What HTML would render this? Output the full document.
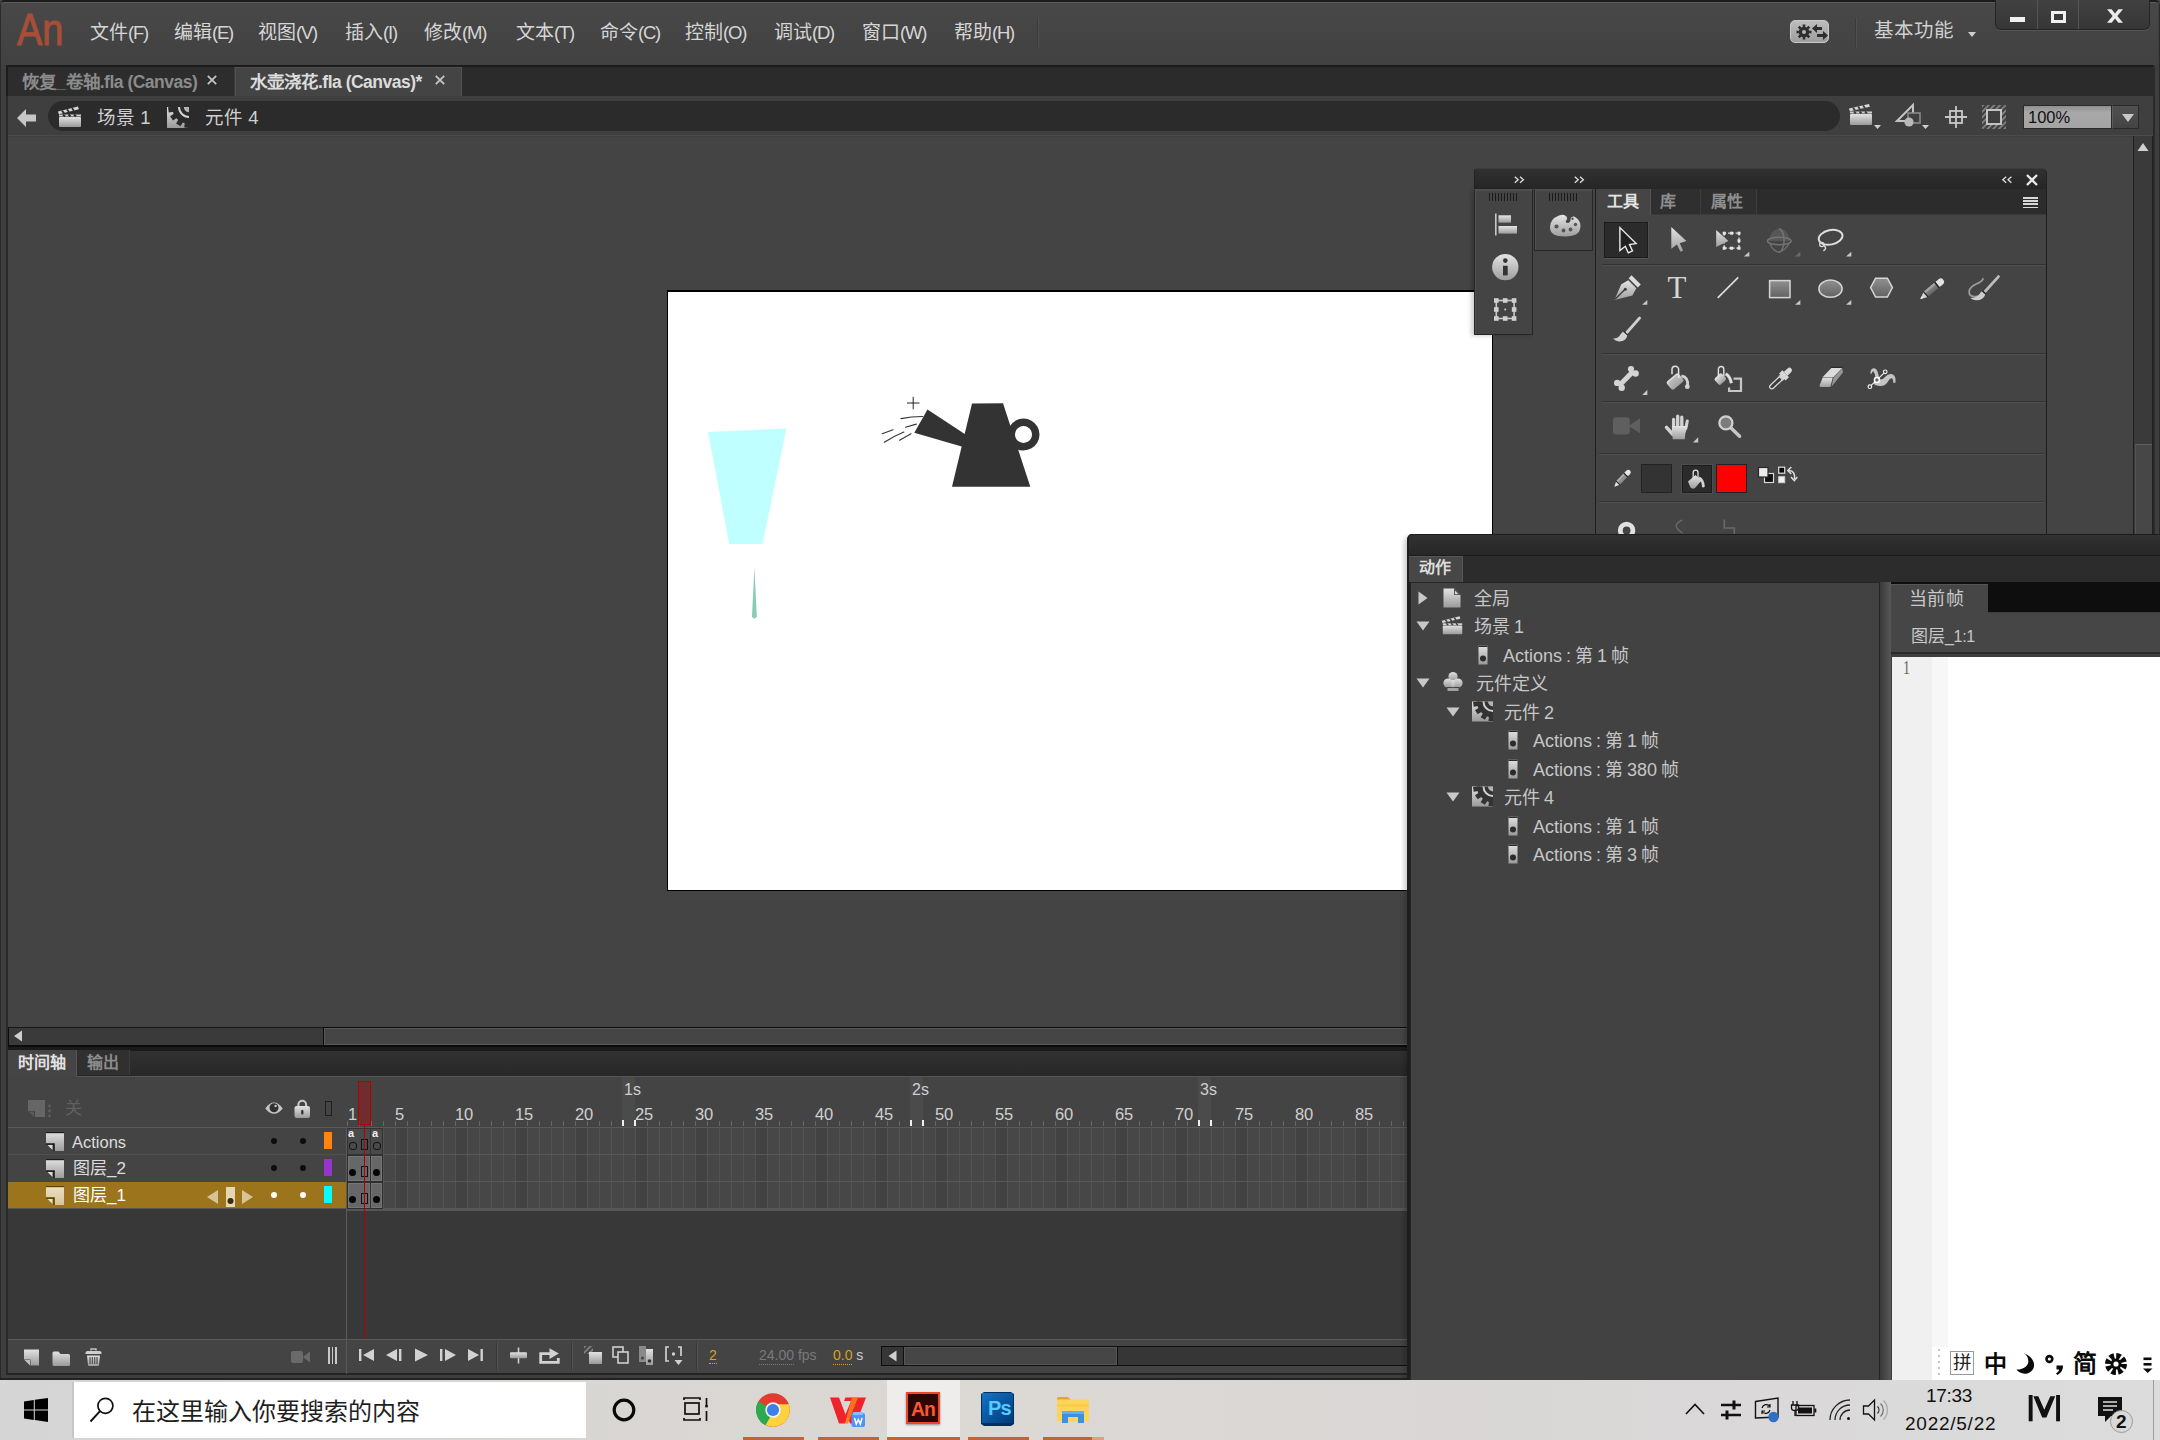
<!DOCTYPE html>
<html lang="zh-CN">
<head>
<meta charset="utf-8">
<title>Adobe Animate</title>
<style>
*{box-sizing:border-box;margin:0;padding:0}
html,body{width:2160px;height:1440px;overflow:hidden;background:#444;font-family:"Liberation Sans",sans-serif;color:#d2d2d2}
.a{position:absolute}
.t{position:absolute;white-space:nowrap;line-height:1}
svg{position:absolute;overflow:visible}
/* ---------- app frame ---------- */
#app{left:0;top:0;width:2160px;height:1380px;background:#3e3e3e;border-radius:5px 5px 0 0;overflow:hidden}
#menubar{left:1px;top:2px;width:2157px;height:63px;background:linear-gradient(#484848,#414141);border-radius:4px 4px 0 0;border-top:1px solid #5c5c5c}
.menu{top:23px;font-size:19px;color:#d6d6d6}
#tabbar{left:6px;top:65px;width:2148px;height:31px;background:#2b2b2b;border-top:2px solid #1c1c1c;border-left:2px solid #1c1c1c}
.doctab{top:67px;height:29px;font-size:17px;font-weight:bold}
#crumb{left:8px;top:96px;width:2146px;height:40px;background:#3f3f3f;border-bottom:1px solid #4c4c4c}
#pill{left:48px;top:101px;width:1792px;height:30px;border-radius:15px;background:#2b2b2b}
#stagearea{left:8px;top:137px;width:2125px;height:890px;background:#444}
#stage{left:667px;top:290px;width:826px;height:601px;background:#fff;border:1px solid #000;border-top-width:2px}

#logo{left:17px;top:8px;font-size:44px;color:#a84e36;transform-origin:0 0;transform:scaleX(.86);letter-spacing:0px;-webkit-text-stroke:1px #a84e36}
.l{letter-spacing:-1.2px;font-size:18.5px}
.l2{letter-spacing:-.5px}
.doctabt{top:74px;font-size:17.5px;font-weight:bold}
.crumbt{top:109px;font-size:18.5px;color:#cfcfcf}
#syncbtn{left:1790px;top:20px;width:39px;height:23px;border-radius:5px;background:linear-gradient(#bdbdbd,#9e9e9e);border:1px solid #c9c9c9}
.tri-d{width:0;height:0;border-left:4px solid transparent;border-right:4px solid transparent;border-top:5px solid #d0d0d0}
.tri-d2{width:0;height:0;border-left:6px solid transparent;border-right:6px solid transparent;border-top:8px solid #c8c8c8}
#winbtns{left:1995px;top:0;width:155px;height:30px;border-radius:0 0 6px 6px;background:linear-gradient(#414141,#363636);border:1px solid #252525;border-top:none;box-shadow:0 1px 0 #555}
#zoombox{left:2023px;top:105px;width:89px;height:24px;background:linear-gradient(#8f8f8f,#a8a8a8 30%,#a4a4a4);border:1px solid #2a2a2a}
#zoombtn{left:2112px;top:105px;width:27px;height:24px;background:linear-gradient(#505050,#444);border:1px solid #2a2a2a;border-left:1px solid #5c5c5c}
/* scrollbars */
#vscroll{left:2133px;top:136px;width:20px;height:900px;background:#3a3a3a;border-left:1.5px solid #1f1f1f;border-right:1.5px solid #1f1f1f}
#hscroll{left:8px;top:1026.5px;width:1399px;height:20px;background:#3a3a3a;border-top:1.5px solid #181818;border-bottom:2px solid #0c0c0c;border-left:1.5px solid #0c0c0c}
/* ---------- timeline ---------- */
#tl{left:8px;top:1047px;width:1399px;height:327px;background:#444}
#tltabs{left:8px;top:1046.5px;width:1399px;height:29.5px;background:linear-gradient(#313131,#282828);border-top:4px solid #1b1b1b}
#tlbelow{left:8px;top:1209px;width:1399px;height:130px;background:#383838}
.kf{height:27px;background:#676767;border:1px solid #2e2e2e;box-shadow:inset 0 0 0 1px #767676}
#tlbar{left:8px;top:1339px;width:1399px;height:35px;background:#444;border-top:1px solid #5a5a5a;border-bottom:1px solid #222}

/* ---------- floating panels ---------- */
#fp1head{left:1474px;top:168px;width:121px;height:21px;background:linear-gradient(#303030,#262626);border-top:1px solid #3c3c3c;border-radius:4px 0 0 0;border-left:1px solid #222}
.chev{font-size:13px;color:#dcdcdc;letter-spacing:0;transform:scaleY(.9)}
#col1{left:1474px;top:189px;width:59px;height:146px;background:#444;border:1px solid #262626;border-top:1px solid #4e4e4e;box-shadow:inset 1px 1px 0 #505050,-3px 1px 4px rgba(0,0,0,.18)}
#col2{left:1534px;top:189px;width:59px;height:62px;background:#444;border:1px solid #262626;border-top:1px solid #4e4e4e;box-shadow:inset 1px 1px 0 #505050}
.grip{width:29px;height:8px;background:repeating-linear-gradient(90deg,#1a1a1a 0,#1a1a1a 1.4px,transparent 1.4px,transparent 3px)}
#tphead{left:1594px;top:168px;width:453px;height:21px;background:linear-gradient(#303030,#262626);border-top:1px solid #3c3c3c;border-radius:0 5px 0 0;border-right:1px solid #222}
#tp{left:1595px;top:189px;width:452px;height:345px;background:#444;border-left:1px solid #1e1e1e;border-right:1px solid #1e1e1e;overflow:hidden}
#tptabs{left:0;top:0;width:452px;height:26px;background:#2c2c2c;border-bottom:1px solid #3a3a3a}
.sep{left:6px;width:445px;height:2px;background:#333;border-bottom:1px solid #4f4f4f}
#ap{left:1407px;top:534px;width:753px;height:846px;background:#3e3e3e;border-left:3px solid #1e1e1e;border-radius:5px 0 0 0;overflow:visible;box-shadow:-3px 3px 5px rgba(0,0,0,.2)}
#aphead{left:-1.5px;top:0;width:755px;height:21px;background:linear-gradient(#313131,#272727);border-top:1px solid #1e1e1e;border-radius:3px 0 0 0}
#aptabs{left:0;top:21px;width:753px;height:27px;background:#2c2c2c;border-top:1px solid #1c1c1c}
#tree{left:0;top:48px;width:470px;height:800px;background:#424242;border:1px solid #252525}
.trt{font-size:18px;color:#c6c6c6;word-spacing:-1px}
#apdiv{left:470px;top:48px;width:11px;height:800px;background:linear-gradient(90deg,#3a3a3a,#585858)}

#ticks{left:347px;top:1121px;width:1060px;height:5px;background:repeating-linear-gradient(90deg,#686868 0,#686868 1.5px,transparent 1.5px,transparent 12px)}
.sec{top:1082px;font-size:16px;color:#cfcfcf}
.rn{top:1106px;font-size:16.5px;color:#d0d0d0;letter-spacing:-.3px}
.grid{left:347px;width:1060px;height:27px;background:repeating-linear-gradient(90deg,#535353 0,#535353 1px,transparent 1px,transparent 12px),repeating-linear-gradient(90deg,transparent 0,transparent 48px,#424242 48px,#424242 60px),#474747;border-bottom:1px solid #585858}
.ln{font-size:16.5px;color:#dcdcdc}
.dot{width:6px;height:6px;border-radius:3px;background:#0c0c0c}
.kc{width:8px;height:8px;border-radius:3px;border:1.5px solid #111}
.kr{width:7px;height:11px;border:1.5px solid #111}
.kd{width:7.4px;height:7.4px;border-radius:4px;background:#050505}

.vsep{top:1342px;width:2px;height:28px;background:#383838;border-right:1px solid #525252}
/* ---------- taskbar ---------- */
#taskbar{left:0;top:1380px;width:2160px;height:60px;background:linear-gradient(90deg,#d5d5d5 0%,#d8d6d3 25%,#dcd8d4 45%,#d9d6d6 70%,#dcdcdc 100%)}
#search{left:74px;top:1382px;width:512px;height:56px;background:#fff}

.ul{top:1437px;height:3px;background:#c8622f}
.ime{top:1353px;font-size:20px;font-weight:bold;color:#0a0a0a}
</style>
</head>
<body>
<div id="app" class="a">
  <div id="menubar" class="a"></div>
  <div id="tabbar" class="a"></div>
  <div id="crumb" class="a"></div>
  <div id="pill" class="a"></div>


  <!-- window frame lines -->
  <div class="a" style="left:0;top:0;width:2160px;height:2px;background:#1c1c1c"></div>
  <div class="a" style="left:0;top:4px;width:1px;height:1376px;background:#2a2a2a"></div>
  <div class="a" style="left:6px;top:96px;width:2px;height:1278px;background:#2a2a2a"></div>
  <div class="a" style="left:2153px;top:66px;width:2px;height:470px;background:#2a2a2a"></div>
  <div class="a" style="left:2159px;top:4px;width:1px;height:530px;background:#2a2a2a"></div>
  <div class="a" style="left:6px;top:1373px;width:1402px;height:2px;background:#262626"></div>
  <div class="a" style="left:0;top:1378px;width:1408px;height:2px;background:#222"></div>
  <!-- ===== menu bar ===== -->
  <div class="t" id="logo">An</div>
  <div class="t menu" style="left:90px">文件<span class="l">(F)</span></div>
  <div class="t menu" style="left:174px">编辑<span class="l">(E)</span></div>
  <div class="t menu" style="left:258px">视图<span class="l">(V)</span></div>
  <div class="t menu" style="left:345px">插入<span class="l">(I)</span></div>
  <div class="t menu" style="left:424px">修改<span class="l">(M)</span></div>
  <div class="t menu" style="left:516px">文本<span class="l">(T)</span></div>
  <div class="t menu" style="left:600px">命令<span class="l">(C)</span></div>
  <div class="t menu" style="left:685px">控制<span class="l">(O)</span></div>
  <div class="t menu" style="left:774px">调试<span class="l">(D)</span></div>
  <div class="t menu" style="left:862px">窗口<span class="l">(W)</span></div>
  <div class="t menu" style="left:954px">帮助<span class="l">(H)</span></div>
  <div class="a" style="left:1037px;top:18px;width:2px;height:30px;background:#3a3a3a;border-right:1px solid #505050"></div>
  <!-- sync button -->
  <div class="a" id="syncbtn"></div>
  <svg style="left:1795px;top:22px" width="34" height="20" viewBox="0 0 34 20">
    <g fill="#2e2e2e">
      <circle cx="9" cy="10" r="5.2"/>
      <g stroke="#2e2e2e" stroke-width="2.6" stroke-linecap="butt">
        <path d="M9 2.5V17.5M1.5 10H16.5M3.7 4.7L14.3 15.3M14.3 4.7L3.7 15.3"/>
      </g>
      <circle cx="9" cy="10" r="2" fill="#b4b4b4"/>
      <path d="M17 6.5l5-4.5v3h5v3h-5v3z"/>
      <path d="M33 13.5l-5 4.5v-3h-6v-3h6v-3z"/>
    </g>
  </svg>
  <div class="a" style="left:1855px;top:18px;width:2px;height:30px;background:#3a3a3a;border-right:1px solid #505050"></div>
  <div class="t" style="left:1874px;top:21px;font-size:19.5px;color:#d0d0d0">基本功能</div>
  <div class="a tri-d" style="left:1968px;top:32px"></div>
  <!-- window buttons -->
  <div class="a" id="winbtns">
    <div class="a" style="left:41px;top:0;width:1px;height:29px;background:#2a2a2a;border-right:1px solid #555"></div>
    <div class="a" style="left:82px;top:0;width:1px;height:29px;background:#2a2a2a;border-right:1px solid #555"></div>
    <div class="a" style="left:14px;top:17px;width:15px;height:5px;background:#f0f0f0"></div>
    <div class="a" style="left:55px;top:11px;width:15px;height:12px;border:3px solid #f0f0f0"></div>
    <svg style="left:110.5px;top:9px" width="16" height="14" viewBox="0 0 15.5 13.3"><path d="M0 0H4.5L7.75 4.3L11 0H15.5L10 6.65L15.5 13.3H11L7.75 9L4.5 13.3H0L5.5 6.65z" fill="#ececec"/></svg>
  </div>
  <!-- ===== document tabs ===== -->
  <div class="a" style="left:8px;top:67px;width:227px;height:29px;background:#2d2d2d;border-right:1px solid #3c3c3c"></div>
  <div class="a" style="left:235px;top:67px;width:227px;height:29px;background:#444;border-top:1px solid #515151;border-right:1px solid #515151;border-left:1px solid #515151"></div>
  <div class="t doctabt" style="left:22px;color:#8b8b8b">恢复_卷轴<span class="l2">.fla (Canvas)</span></div>
  <div class="t doctabt" style="left:250px;color:#dcdcdc">水壶浇花<span class="l2">.fla (Canvas)*</span></div>
  <svg style="left:207px;top:75px" width="10" height="10" viewBox="0 0 10 10"><path d="M0.8 0.8L9.2 9.2M9.2 0.8L0.8 9.2" stroke="#c8c8c8" stroke-width="1.7"/></svg>
  <svg style="left:435px;top:75px" width="10" height="10" viewBox="0 0 10 10"><path d="M0.8 0.8L9.2 9.2M9.2 0.8L0.8 9.2" stroke="#c8c8c8" stroke-width="1.7"/></svg>
  <!-- ===== breadcrumb row ===== -->
  <svg style="left:17px;top:109px" width="20" height="18" viewBox="0 0 20 18"><path d="M0 9L9 0v5.5h10v7H9V18z" fill="#c6c6c6"/></svg>
  <svg style="left:57px;top:106px" width="26" height="22" viewBox="0 0 26 22" id="clap1">
    <defs><clipPath id="symclip"><rect x="0" y="0" width="22" height="21"/></clipPath><linearGradient id="gg" x1="0" y1="0" x2="0" y2="1"><stop offset="0" stop-color="#e2e2e2"/><stop offset="1" stop-color="#9a9a9a"/></linearGradient></defs>
    <rect x="2" y="11" width="22" height="10" rx="1" fill="url(#gg)"/>
    <path d="M2 8.5h22v2H2z" fill="#d0d0d0"/>
    <path d="M1 5.5L21 0.5l0.8 2.8L1.8 8.3z" fill="#d8d8d8"/>
    <path d="M5 4.6l2 2.6M10 3.4l2 2.6M15 2.2l2 2.6M6 8.5l2 2M11.5 8.5l2 2M17 8.5l2 2" stroke="#2b2b2b" stroke-width="1.8"/>
  </svg>
  <div class="t crumbt" style="left:97px">场景 1</div>
  <svg style="left:167px;top:107px" width="22" height="21" viewBox="0 0 22 21">
    <rect x="0" y="0" width="22" height="21" fill="url(#gg)"/><g fill="#2b2b2b" clip-path="url(#symclip)"><circle cx="22" cy="0" r="16.8"/><rect x="-2.6" y="14" width="5.2" height="6.8" transform="translate(22 0) rotate(82)"/><rect x="-2.6" y="14" width="5.2" height="6.8" transform="translate(22 0) rotate(57)"/><rect x="-2.6" y="14" width="5.2" height="6.8" transform="translate(22 0) rotate(31)"/><rect x="-2.6" y="14" width="5.2" height="6.8" transform="translate(22 0) rotate(6)"/></g><circle cx="22" cy="0" r="10" fill="none" stroke="#d2d2d2" stroke-width="2" clip-path="url(#symclip)"/><circle cx="22" cy="0" r="5.2" fill="#b4b4b4" clip-path="url(#symclip)"/>
  </svg>
  <div class="t crumbt" style="left:205px">元件 4</div>
  <!-- right-side icons on crumb row -->
  <svg style="left:1849px;top:104px" width="34" height="26" viewBox="0 0 34 26">
    <rect x="1" y="10" width="22" height="11" rx="1" fill="url(#gg)"/>
    <path d="M1 7.5h22v2H1z" fill="#d0d0d0"/>
    <path d="M0 4.5L20 0l0.8 2.8L0.8 7.3z" fill="#d8d8d8"/>
    <path d="M4 3.6l2 2.6M9 2.5l2 2.6M14 1.4l2 2.6M5 7.5l2 2M10.5 7.5l2 2M16 7.5l2 2" stroke="#3f3f3f" stroke-width="1.8"/>
    <path d="M25 21h7l-3.5 4z" fill="#d0d0d0"/>
  </svg>
  <svg style="left:1896px;top:104px" width="36" height="26" viewBox="0 0 36 26">
    <path d="M1 17L17 1v16z" fill="none" stroke="#c4c4c4" stroke-width="2"/>
    <rect x="12" y="9" width="12" height="10" fill="#3f3f3f" stroke="#8a8a8a" stroke-width="1.6"/>
    <circle cx="13" cy="18" r="4.6" fill="#b9b9b9"/>
    <path d="M26 21h7l-3.5 4z" fill="#d0d0d0"/>
  </svg>
  <svg style="left:1944px;top:105px" width="24" height="24" viewBox="0 0 24 24"><path d="M12 1v22M1 12h22" stroke="#c8c8c8" stroke-width="1.8"/><rect x="6" y="6" width="12" height="12" fill="none" stroke="#c8c8c8" stroke-width="1.8"/></svg>
  <svg style="left:1982px;top:105px" width="24" height="24" viewBox="0 0 24 24">
    <defs><pattern id="hatch" width="4" height="4" patternUnits="userSpaceOnUse" patternTransform="rotate(-45)"><rect width="4" height="1.6" fill="#8c8c8c"/></pattern></defs>
    <rect x="0" y="0" width="24" height="24" fill="url(#hatch)"/>
    <rect x="5" y="5" width="14" height="14" fill="#3f3f3f" stroke="#d0d0d0" stroke-width="1.8"/>
  </svg>
  <div class="a" id="zoombox"><div class="t" style="left:4px;top:3px;font-size:16.5px;color:#111">100%</div></div>
  <div class="a" id="zoombtn"><div class="a tri-d2" style="left:9px;top:8px"></div></div>
  <div id="stagearea" class="a"></div>
  <div id="stage" class="a"></div>

  <!-- ===== stage artwork ===== -->
  <svg style="left:0;top:0" width="2160" height="1440" viewBox="0 0 2160 1440" id="art">
    <polygon points="708,432 786.5,428.5 762.5,544 729.2,544" fill="#bfffff"/>
    <path d="M754.4 567.5L756.8 616.5Q754.4 620.5 752 616.5Z" fill="#86ccb6"/>
    <g fill="#333">
      <polygon points="972,403.6 1003,403.2 1030.3,486.8 952,486.8"/>
      <polygon points="927.5,409.5 914.3,432.8 962.5,446.8 965.5,434.6"/>
      <path d="M1023.5 418.5a16 16 0 1 1 -0.01 0zM1023.5 426a8.5 8.5 0 1 0 0.01 0z" fill-rule="evenodd"/>
    </g>
    <g fill="none" stroke="#333" stroke-width="1.1" stroke-linecap="round">
      <path d="M901 418.6Q911 416.5 922.5 416.5"/>
      <path d="M905.5 427.3L916.3 424.1"/>
      <path d="M882.2 433.8L893 429.8"/>
      <path d="M884.3 442.2Q893 436.5 903.8 432"/>
      <path d="M899.6 440.2L911 433.8"/>
    </g>
    <path d="M907 403h12.5M913.2 396.8v12.5" stroke="#222" stroke-width="1" fill="none"/>
  </svg>
  <div id="vscroll" class="a"></div>
  <div id="hscroll" class="a"></div>
  <div id="tl" class="a"></div>
  <div id="tltabs" class="a"></div>
  <div id="tlbelow" class="a"></div>
  <div id="tlbar" class="a"></div>
  <!-- ===== timeline ===== -->
  <div class="a" style="left:8px;top:1050px;width:69px;height:26px;background:#454545;border-right:1px solid #555"></div>
  <div class="a" style="left:77px;top:1050px;width:53px;height:25px;background:#303030;border-right:1px solid #3d3d3d"></div>
  <div class="t" style="left:18px;top:1055px;font-size:16px;font-weight:bold;color:#e2e2e2">时间轴</div>
  <div class="t" style="left:87px;top:1055px;font-size:16px;font-weight:bold;color:#8c8c8c">输出</div>
  <div class="a" style="left:77px;top:1076px;width:1330px;height:1px;background:#565656"></div>
  <!-- layer header -->
  <svg style="left:27px;top:1099px" width="26" height="20" viewBox="0 0 26 20"><path d="M1 1h17v17H8v-6H1z" fill="#666"/><path d="M1.5 12.5h5.5v5.5z" fill="#5a5a5a"/><circle cx="22.5" cy="7" r="1.4" fill="#5e5e5e"/><circle cx="22.5" cy="12" r="1.4" fill="#5e5e5e"/><circle cx="22.5" cy="17" r="1.4" fill="#5e5e5e"/></svg>
  <div class="t" style="left:65px;top:1100px;font-size:17px;color:#616161">关</div>
  <svg style="left:265px;top:1101px" width="18" height="14.5" viewBox="0 0 18 14.5"><path d="M0.3 7.4Q9-4.2 17.7 7.4Q9 18.2 0.3 7.4z" fill="#c6c6c6"/><circle cx="9" cy="6.8" r="4.5" fill="#303030"/><circle cx="10.6" cy="5" r="1.3" fill="#bdbdbd"/></svg>
  <svg style="left:294px;top:1099px" width="16.5" height="19.5" viewBox="0 0 16.5 19.5"><path d="M4.4 8V5.6a3.85 3.85 0 0 1 7.7 0V8" fill="none" stroke="#cacaca" stroke-width="2.1"/><rect x="0.5" y="7" width="15.5" height="12" rx="2.2" fill="url(#gg)"/><rect x="7.2" y="11" width="2.2" height="4.6" rx=".8" fill="#2e2e2e"/></svg>
  <div class="a" style="left:325px;top:1101px;width:7px;height:15px;border:1.5px solid #1e1e1e"></div>
  <!-- ruler -->
  <div class="a" style="left:622px;top:1077px;width:13px;height:51px;background:#4b4b4b"></div>
  <div class="a" style="left:910px;top:1077px;width:13px;height:51px;background:#4b4b4b"></div>
  <div class="a" style="left:1198px;top:1077px;width:13px;height:51px;background:#4b4b4b"></div>
  <div class="a" id="ticks"></div>
  <div class="a" style="left:622px;top:1120px;width:2px;height:6px;background:#f0f0f0"></div><div class="a" style="left:634px;top:1120px;width:2px;height:6px;background:#f0f0f0"></div>
  <div class="a" style="left:910px;top:1120px;width:2px;height:6px;background:#f0f0f0"></div><div class="a" style="left:922px;top:1120px;width:2px;height:6px;background:#f0f0f0"></div>
  <div class="a" style="left:1198px;top:1120px;width:2px;height:6px;background:#f0f0f0"></div><div class="a" style="left:1210px;top:1120px;width:2px;height:6px;background:#f0f0f0"></div>
  <div class="t sec" style="left:624px">1s</div><div class="t sec" style="left:912px">2s</div><div class="t sec" style="left:1200px">3s</div>
  <div class="t rn" style="left:348px">1</div>
  <div class="t rn" style="left:395px">5</div>
  <div class="t rn" style="left:455px">10</div><div class="t rn" style="left:515px">15</div><div class="t rn" style="left:575px">20</div><div class="t rn" style="left:635px">25</div>
  <div class="t rn" style="left:695px">30</div><div class="t rn" style="left:755px">35</div><div class="t rn" style="left:815px">40</div><div class="t rn" style="left:875px">45</div>
  <div class="t rn" style="left:935px">50</div><div class="t rn" style="left:995px">55</div><div class="t rn" style="left:1055px">60</div><div class="t rn" style="left:1115px">65</div>
  <div class="t rn" style="left:1175px">70</div><div class="t rn" style="left:1235px">75</div><div class="t rn" style="left:1295px">80</div><div class="t rn" style="left:1355px">85</div>
  <div class="a" style="left:8px;top:1127px;width:1399px;height:1px;background:#5a5a5a"></div>
  <!-- layer rows -->
  <div class="a" style="left:8px;top:1154px;width:338px;height:1px;background:#505050"></div>
  <div class="a" style="left:8px;top:1182px;width:338px;height:26px;background:#9b741c"></div>
  <div class="a" style="left:8px;top:1208px;width:1399px;height:1px;background:#555"></div>
  <div class="a" style="left:346px;top:1128px;width:1px;height:246px;background:#5a5a5a"></div>
  <div class="a grid" style="top:1128px"></div>
  <div class="a grid" style="top:1155px"></div>
  <div class="a grid" style="top:1182px"></div>
  <div class="a" style="left:346px;top:1209px;width:1061px;height:2px;background:#565656"></div>
  <svg style="left:46px;top:1132px" width="18" height="19" viewBox="0 0 18 19"><defs><linearGradient id="gl1132" x1="0" y1="0" x2="0" y2="1"><stop offset="0" stop-color="#dcdcdc"/><stop offset="1" stop-color="#9c9c9c"/></linearGradient></defs><rect x="0" y="0" width="18" height="1.3" fill="#1c1c1c"/><path d="M0 1.3h18V19H8v-7H0z" fill="url(#gl1132)"/><path d="M0 12h8v7" fill="none" stroke="#1c1c1c" stroke-width="1.6"/><path d="M1.5 13h5v5z" fill="#dcdcdc"/></svg>
  <svg style="left:46px;top:1159px" width="18" height="19" viewBox="0 0 18 19"><defs><linearGradient id="gl1159" x1="0" y1="0" x2="0" y2="1"><stop offset="0" stop-color="#dcdcdc"/><stop offset="1" stop-color="#9c9c9c"/></linearGradient></defs><rect x="0" y="0" width="18" height="1.3" fill="#1c1c1c"/><path d="M0 1.3h18V19H8v-7H0z" fill="url(#gl1159)"/><path d="M0 12h8v7" fill="none" stroke="#1c1c1c" stroke-width="1.6"/><path d="M1.5 13h5v5z" fill="#dcdcdc"/></svg>
  <svg style="left:46px;top:1186px" width="18" height="19" viewBox="0 0 18 19"><defs><linearGradient id="gs1186" x1="0" y1="0" x2="0" y2="1"><stop offset="0" stop-color="#ecdfc0"/><stop offset="1" stop-color="#d6c49a"/></linearGradient></defs><rect x="0" y="0" width="18" height="1.3" fill="#5a4000"/><path d="M0 1.3h18V19H8v-7H0z" fill="url(#gs1186)"/><path d="M0 12h8v7" fill="none" stroke="#5a4000" stroke-width="1.6"/><path d="M1.5 13h5v5z" fill="#ecdfc0"/></svg>
  <div class="t ln" style="left:72px;top:1134px">Actions</div>
  <div class="t ln" style="left:73px;top:1160px;font-size:17px">图层_2</div>
  <div class="t ln" style="left:73px;top:1187px;font-size:17px;color:#fff">图层_1</div>
  <div class="a dot" style="left:271px;top:1138px"></div><div class="a dot" style="left:300px;top:1138px"></div>
  <div class="a dot" style="left:271px;top:1165px"></div><div class="a dot" style="left:300px;top:1165px"></div>
  <div class="a dot" style="left:271px;top:1192px;background:#fff"></div><div class="a dot" style="left:300px;top:1192px;background:#fff"></div>
  <div class="a" style="left:324px;top:1132px;width:8px;height:17px;background:#ff8412"></div>
  <div class="a" style="left:324px;top:1159px;width:8px;height:17px;background:#9a33cc"></div>
  <div class="a" style="left:324px;top:1186px;width:8px;height:17px;background:#00ffff"></div>
  <svg style="left:206px;top:1187px" width="50" height="20" viewBox="0 0 50 20"><path d="M12 3v14L1 10z" fill="#d8c394"/><path d="M36 3v14l11-7z" fill="#d8c394"/><rect x="20" y="0" width="9" height="20" fill="#e6d7b3"/><circle cx="24.5" cy="14" r="3" fill="#3a2c08"/></svg>
  <!-- frames 1-3 -->
  <div class="a" style="left:347px;top:1128px;width:24px;height:27px;background:#4a4a4a;border:1px solid #333"></div>
  <div class="a" style="left:371px;top:1128px;width:12px;height:27px;background:#4a4a4a;border:1px solid #333;border-left:none"></div>
  <div class="a kf" style="left:347px;top:1155px;width:24px"></div>
  <div class="a kf" style="left:371px;top:1155px;width:12px;border-left:none"></div>
  <div class="a kf" style="left:347px;top:1182px;width:24px"></div>
  <div class="a kf" style="left:371px;top:1182px;width:12px;border-left:none"></div>
  <div class="t" style="left:348px;top:1128px;font-size:11px;font-weight:bold;color:#eee">a</div><div class="t" style="left:372px;top:1128px;font-size:11px;font-weight:bold;color:#eee">a</div>
  <div class="a kc" style="left:349px;top:1142px"></div><div class="a kc" style="left:373px;top:1142px"></div>
  <div class="a kr" style="left:361px;top:1139px"></div><div class="a kr" style="left:361px;top:1166px"></div><div class="a kr" style="left:361px;top:1193px"></div>
  <div class="a kd" style="left:349px;top:1169px"></div><div class="a kd" style="left:373px;top:1169px"></div>
  <div class="a kd" style="left:349px;top:1196px"></div><div class="a kd" style="left:373px;top:1196px"></div>

  <!-- stage h-scroll details -->
  <div class="a" style="left:322.5px;top:1026.5px;width:1086px;height:20px;background:#454545;border:1.5px solid #0a0a0a;border-bottom-width:2px;box-shadow:inset 0 0 0 1px #595959"></div>
  <svg style="left:13px;top:1030px" width="10" height="12" viewBox="0 0 10 12"><path d="M9 0.5v11L1 6z" fill="#d0d0d0"/></svg>
  <!-- stage v-scroll details -->
  <div class="a" style="left:2135px;top:444px;width:17px;height:100px;background:#474747;border-top:1px solid #5c5c5c;border-left:1px solid #555"></div>
  <svg style="left:2137px;top:142px" width="12" height="10" viewBox="0 0 12 10"><path d="M0.5 9h11L6 1z" fill="#d0d0d0"/></svg>
  <!-- timeline bottom bar -->
  <svg style="left:23px;top:1349px" width="16" height="17" viewBox="0 0 16 17"><path d="M1 0.5h15v16H7.5v-6H1z" fill="url(#gg)"/><path d="M1.5 11h5.5v5.5z" fill="#bdbdbd"/></svg>
  <svg style="left:52px;top:1351px" width="18" height="15" viewBox="0 0 18 15"><path d="M0.5 2a1.5 1.5 0 0 1 1.5-1.5h4.5l2 2.5h8a1.5 1.5 0 0 1 1.5 1.5v9a1.5 1.5 0 0 1-1.5 1.5h-14.5a1.5 1.5 0 0 1-1.5-1.5z" fill="url(#gg)"/></svg>
  <svg style="left:85px;top:1348px" width="17" height="18" viewBox="0 0 17 18"><path d="M6 2.5V1h5v1.5" fill="none" stroke="#c4c4c4" stroke-width="1.4"/><path d="M0.5 5q0-2 2-2h12q2 0 2 2v1h-16z" fill="#cfcfcf"/><path d="M2 7.5h13l-1 9.5q-.1 1-1 1H4q-.9 0-1-1z" fill="url(#gg)"/><path d="M5 9v7M7.3 9v7M9.7 9v7M12 9v7" stroke="#444" stroke-width="1.1"/></svg>
  <svg style="left:291px;top:1350px" width="20" height="14" viewBox="0 0 20 14"><rect x="0" y="1" width="12" height="12" rx="2" fill="#6a6a6a"/><path d="M12 7l7-5.5v11z" fill="#6a6a6a"/></svg>
  <div class="a" style="left:328px;top:1347px;width:9px;height:17px;background:repeating-linear-gradient(90deg,#c8c8c8 0,#c8c8c8 1.5px,transparent 1.5px,transparent 3.5px)"></div>
  <svg style="left:358px;top:1347px" width="130" height="16" viewBox="0 0 130 16" fill="#d2d2d2">
    <rect x="1" y="2" width="2.4" height="12"/><path d="M16 2v12L5 8z"/>
    <path d="M39 2v12L28 8z"/><rect x="41" y="2" width="2.4" height="12"/>
    <path d="M57 1.5v13L70 8z"/>
    <rect x="82" y="2" width="2.4" height="12"/><path d="M87 2v12l11-6z"/>
    <path d="M110 2v12l11-6z"/><rect x="122.5" y="2" width="2.4" height="12"/>
  </svg>
  <div class="a vsep" style="left:496px"></div>
  <svg style="left:510px;top:1347px" width="17" height="17" viewBox="0 0 17 17"><path d="M8.5 0.5v16" stroke="#d0d0d0" stroke-width="1.6"/><rect x="0" y="5.3" width="17" height="6" rx="1" fill="url(#gg)"/></svg>
  <svg style="left:538px;top:1347px" width="22" height="18" viewBox="0 0 22 18"><path d="M20.3 11V15.4H2.7V6.6H12.5" fill="none" stroke="#d2d2d2" stroke-width="2.8"/><path d="M11.5 1.2L20.8 6.6L11.5 12z" fill="#d2d2d2"/></svg>
  <div class="a vsep" style="left:571px"></div>
  <svg style="left:584px;top:1346px" width="18" height="18" viewBox="0 0 18 18"><rect x="0" y="0" width="9" height="8" fill="url(#hatch)"/><rect x="5" y="6" width="13" height="12" fill="url(#gg)"/></svg>
  <svg style="left:612px;top:1346px" width="18" height="18" viewBox="0 0 18 18"><rect x="1" y="1" width="10" height="10" fill="none" stroke="#d0d0d0" stroke-width="1.6"/><rect x="6" y="6" width="10" height="11" fill="#444" stroke="#d0d0d0" stroke-width="1.6"/></svg>
  <svg style="left:639px;top:1346px" width="16" height="19" viewBox="0 0 16 19"><rect x="0" y="0" width="7" height="16" fill="#8a8a8a"/><rect x="7" y="3" width="7" height="16" fill="url(#gg)"/><circle cx="10.5" cy="15" r="1.8" fill="#333"/><circle cx="3.5" cy="12" r="1.5" fill="#444"/></svg>
  <svg style="left:665px;top:1346px" width="18" height="20" viewBox="0 0 18 20"><path d="M4 1H1v14h3M13 1h3v9" fill="none" stroke="#d0d0d0" stroke-width="1.7"/><circle cx="8.5" cy="8" r="1.7" fill="#d0d0d0"/><path d="M9.5 14h8l-4 5z" fill="#d0d0d0"/></svg>
  <div class="a vsep" style="left:696px"></div>
  <div class="t" style="left:709px;top:1348px;font-size:14px;color:#d8a11e;border-bottom:1px dotted #d8a11e;padding-bottom:1px">2</div>
  <div class="t" style="left:759px;top:1348px;font-size:14px;color:#7a7a7a"><span style="border-bottom:1px dotted #7a7a7a;padding-bottom:1px">24.00</span> fps</div>
  <div class="t" style="left:833px;top:1348px;font-size:14px;color:#d0d0d0"><span style="color:#d8a11e;border-bottom:1px dotted #d8a11e;padding-bottom:1px">0.0</span> s</div>
  <div class="a" style="left:881px;top:1346px;width:527px;height:20px;background:#363636;border:1.5px solid #0e0e0e"></div>
  <div class="a" style="left:903px;top:1346px;width:215px;height:20px;background:#464646;border:1.5px solid #0e0e0e;box-shadow:inset 0 0 0 1px #575757"></div>
  <svg style="left:888px;top:1350px" width="9" height="12" viewBox="0 0 9 12"><path d="M8.5 0.5v11L0.5 6z" fill="#d0d0d0"/></svg>
  <!-- playhead -->
  <div class="a" style="left:358px;top:1081px;width:13px;height:44px;background:rgba(140,30,30,.62);border:1px solid #b40000"></div>
  <div class="a" style="left:364px;top:1125px;width:1px;height:213px;background:#b40000"></div>

</div>

<!-- ===== floating icon columns ===== -->
<div class="a" id="fp1head"></div>
<svg style="left:1514px;top:176px" width="10" height="8" viewBox="0 0 10 8"><path d="M0.8 0.8L4.2 3.8L0.8 6.8M6 0.8L9.4 3.8L6 6.8" fill="none" stroke="#e0e0e0" stroke-width="1.3"/></svg>
<svg style="left:1574px;top:176px" width="10" height="8" viewBox="0 0 10 8"><path d="M0.8 0.8L4.2 3.8L0.8 6.8M6 0.8L9.4 3.8L6 6.8" fill="none" stroke="#e0e0e0" stroke-width="1.3"/></svg>
<div class="a" id="col1"><div class="a grip" style="left:14px;top:3px"></div></div>
<div class="a" id="col2"><div class="a grip" style="left:14px;top:3px"></div></div>
<!-- ===== tool panel ===== -->
<div class="a" id="tphead"></div>
<svg style="left:2002px;top:176px" width="10" height="8" viewBox="0 0 10 8"><path d="M4.2 0.8L0.8 3.8L4.2 6.8M9.4 0.8L6 3.8L9.4 6.8" fill="none" stroke="#e0e0e0" stroke-width="1.3"/></svg>
<svg style="left:2026px;top:174px" width="12" height="12" viewBox="0 0 12 12"><path d="M1 1L11 11M11 1L1 11" stroke="#e8e8e8" stroke-width="2.4"/></svg>
<div class="a" id="tp">
  <div class="a" id="tptabs"></div>
  <div class="a" style="left:0;top:0;width:55px;height:26px;background:#454545;border-right:1px solid #555"></div>
  <div class="a" style="left:55px;top:0;width:50px;height:25px;background:#2f2f2f;border-right:1px solid #3d3d3d"></div>
  <div class="a" style="left:105px;top:0;width:56px;height:25px;background:#2f2f2f;border-right:1px solid #3d3d3d"></div>
  <div class="t" style="left:11px;top:5px;font-size:16px;font-weight:bold;color:#e4e4e4">工具</div>
  <div class="t" style="left:64px;top:5px;font-size:16px;font-weight:bold;color:#8e8e8e">库</div>
  <div class="t" style="left:115px;top:5px;font-size:16px;font-weight:bold;color:#8e8e8e">属性</div>
  <div class="a" style="left:427px;top:8px;width:15px;height:11px;background:repeating-linear-gradient(#d8d8d8 0,#d8d8d8 1.5px,transparent 1.5px,transparent 3.2px)"></div>
  <div class="a" style="left:8px;top:33px;width:44px;height:36px;background:#2b2b2b;border:1px solid #1c1c1c;box-shadow:0 1px 0 #555,1px 0 0 #505050"></div>
  <div class="a sep" style="top:75px"></div>
  <div class="a sep" style="top:164px"></div>
  <div class="a sep" style="top:212px"></div>
  <div class="a sep" style="left:3px;top:264px"></div>
  <div class="a sep" style="left:3px;top:312px"></div>
  <div class="a" style="left:45px;top:275px;width:31px;height:29px;background:#333;border:1px solid #222"></div>
  <div class="a" style="left:86px;top:276px;width:30px;height:28px;background:#2b2b2b;border:1px solid #1c1c1c;box-shadow:0 0 0 1px #4e4e4e"></div>
  <div class="a" style="left:120px;top:275px;width:31px;height:29px;background:#f00;border:1px solid #222"></div>
</div>

<!-- ===== tool / dock icons (page coordinates) ===== -->
<svg style="left:0;top:0" width="2160" height="534" viewBox="0 0 2160 534" id="icons">
  <defs>
    <linearGradient id="ig" x1="0" y1="0" x2="0" y2="1"><stop offset="0" stop-color="#e4e4e4"/><stop offset="1" stop-color="#9e9e9e"/></linearGradient>
    <linearGradient id="sg" x1="0" y1="0" x2="0" y2="1"><stop offset="0" stop-color="#909090"/><stop offset="1" stop-color="#626262"/></linearGradient>
  </defs>
  <!-- dock col 1 -->
  <path d="M1495.8 213.5V235.5" stroke="#c8c8c8" stroke-width="1.6"/>
  <rect x="1498.5" y="215.3" width="12.5" height="7.3" fill="url(#ig)"/><rect x="1498.5" y="226" width="18.5" height="7.6" fill="url(#ig)"/>
  <circle cx="1505.3" cy="267.1" r="13.2" fill="url(#ig)"/><circle cx="1505.3" cy="260.6" r="2.3" fill="#333"/><rect x="1503" y="265.8" width="4.7" height="9.6" fill="#333"/>
  <rect x="1496.3" y="300.5" width="17.8" height="18" fill="none" stroke="#c8c8c8" stroke-width="1.6"/>
  <g fill="#d0d0d0"><rect x="1494" y="298.2" width="4.6" height="4.6"/><rect x="1502.9" y="298.2" width="4.6" height="4.6"/><rect x="1511.8" y="298.2" width="4.6" height="4.6"/><rect x="1494" y="307.2" width="4.6" height="4.6"/><rect x="1511.8" y="307.2" width="4.6" height="4.6"/><rect x="1494" y="316.2" width="4.6" height="4.6"/><rect x="1502.9" y="316.2" width="4.6" height="4.6"/><rect x="1511.8" y="316.2" width="4.6" height="4.6"/><circle cx="1505.2" cy="309.5" r="1"/></g>
  <!-- dock col 2 : palette -->
  <path d="M1550 227q0-8 9-11.5q5-2 7.5 1q1.5 2-0.5 4q-1 2.5 2 2.5q3-1 2.5-4q0.5-3 3.5-2.5q6.5 3 6.5 9.5q0 10.5-15.5 10.5t-15-9.5z" fill="url(#ig)"/>
  <g fill="#555"><circle cx="1556.5" cy="226.5" r="2.1"/><circle cx="1563.5" cy="230.5" r="1.9"/><circle cx="1570.5" cy="229.5" r="1.9"/><circle cx="1575.5" cy="224.5" r="1.7"/><circle cx="1572.5" cy="218.8" r="1.2"/></g>
  <!-- row 1 -->
  <path d="M1619.9 227.6V250.5L1625.3 246.3L1628.3 252.9L1632.5 250.9L1629.5 244.5L1636.1 243.6z" fill="#202020" stroke="#ebebeb" stroke-width="1.4" stroke-linejoin="miter"/>
  <path d="M1671.3 227V248.7L1677 244.5L1680.4 251.7L1683.1 250.5L1679.7 243.3L1686.4 240.9z" fill="url(#ig)"/>
  <rect x="1724.2" y="233.2" width="14.8" height="15" fill="none" stroke="#e0e0e0" stroke-width="1.3" stroke-dasharray="2 1.8"/>
  <g fill="#e8e8e8"><rect x="1722.7" y="231.7" width="3" height="3"/><rect x="1730.1" y="231.7" width="3" height="3"/><rect x="1737.5" y="231.7" width="3" height="3"/><rect x="1737.5" y="239.2" width="3" height="3"/><rect x="1722.7" y="246.7" width="3" height="3"/><rect x="1730.1" y="246.7" width="3" height="3"/><rect x="1737.5" y="246.7" width="3" height="3"/></g>
  <path d="M1716.2 230V247L1728.4 241z" fill="url(#ig)"/>
  <path d="M1749.3 251.7V256.5H1743.8z" fill="#c8c8c8"/>
  <path d="M1769.2 241A10.2 12.2 0 0 1 1789.6 241z" fill="#575757"/><ellipse cx="1779.3" cy="241" rx="11.8" ry="3.8" fill="none" stroke="#747474" stroke-width="1.5"/><path d="M1778.8 228.8A5.3 11.7 0 0 1 1778.8 252.2" fill="none" stroke="#747474" stroke-width="1.5"/><path d="M1770.2 244.3Q1772.5 250.5 1778.8 252.3Q1785.5 250.5 1788.8 243.8" fill="none" stroke="#6e6e6e" stroke-width="1.4"/>
  <path d="M1800.4 251.7V256.5H1795z" fill="#6c6c6c"/>
  <ellipse cx="1830.6" cy="237.3" rx="12.1" ry="7.2" transform="rotate(-12 1830.6 237.3)" fill="none" stroke="#dedede" stroke-width="1.9"/>
  <circle cx="1821.8" cy="244.5" r="2.1" fill="none" stroke="#dadada" stroke-width="1.3"/><path d="M1823.8 245.2Q1826.3 247.5 1825.3 249Q1824.8 250.3 1823.3 250.7" fill="none" stroke="#dadada" stroke-width="1.4"/>
  <path d="M1851.3 251.7V256.5H1846z" fill="#c8c8c8"/>
  <!-- row 2 -->
  <path d="M1614.4 299.9L1621.3 284.3L1628.3 280.2L1636.3 288.3L1632.4 295.6z" fill="url(#ig)"/>
  <path d="M1615 299.3L1624.6 289.8" stroke="#3a3a3a" stroke-width="1.3"/><circle cx="1625.3" cy="289.2" r="1.5" fill="#3a3a3a"/>
  <path d="M1631.6 275.3L1640.8 284.6L1637.8 287.5L1628.6 278.3z" fill="#dcdcdc"/>
  <path d="M1647.3 299.9V304.7H1642.1z" fill="#c8c8c8"/>
  <path d="M1717.7 297.8L1738.2 277.3" stroke="#dcdcdc" stroke-width="1.7"/>
  <rect x="1769.6" y="280.6" width="20.4" height="17" fill="url(#sg)" stroke="#d6d6d6" stroke-width="1.5"/>
  <path d="M1800.4 299.9V304.7H1795z" fill="#c8c8c8"/>
  <ellipse cx="1830.5" cy="288.7" rx="11.6" ry="8.6" fill="url(#sg)" stroke="#d6d6d6" stroke-width="1.5"/>
  <path d="M1851.3 299.9V304.7H1846z" fill="#c8c8c8"/>
  <path d="M1870.6 287.6L1875.6 278.2H1887.4L1892.4 287.6L1887.4 297H1875.6z" fill="url(#sg)" stroke="#d6d6d6" stroke-width="1.5"/>
  <g transform="translate(1920.4 298.9) rotate(-40)"><path d="M0 0L7 -3.3V3.3z" fill="#d4d4d4"/><path d="M0 0L2.5 -1.2V1.2z" fill="#f4f4f4"/><rect x="7" y="-3.3" width="14" height="6.6" fill="url(#sg)"/><rect x="7" y="-3.3" width="14" height="2.2" fill="#a2a2a2"/><path d="M22.3 -3.3h4.2a3.3 3.3 0 0 1 0 6.6h-4.2z" fill="#e2e2e2"/><path d="M7 -3.6V3.6M21.6 -3.6V3.6" stroke="#262626" stroke-width="1.3"/></g>
  <path d="M1983.3 278.2C1981.5 285 1971 282.5 1969.2 291C1968.5 296.5 1973.5 297.5 1978 296" fill="none" stroke="#9c9c9c" stroke-width="1.7"/>
  <path d="M1998.5 276.6L1985 291.5" stroke="#bcbcbc" stroke-width="2.8" stroke-linecap="round"/>
  <path d="M1981.5 291.2l3.8 3.3q-2 5.8-8.8 5.8q-4.5-0.3-6-2.5q6.5 1 11-6.6z" fill="#cdcdcd"/><path d="M1982 290.5l4.3 3.8" stroke="#2c2c2c" stroke-width="1.2"/>
  <!-- row 3 -->
  <path d="M1639.6 318L1626.8 332.5" stroke="#cfcfcf" stroke-width="2.8" stroke-linecap="round"/>
  <path d="M1623 331.5L1627.3 335.3Q1626.3 341.6 1619 341.4Q1615.3 341 1613 338.5Q1618.6 338.6 1620.6 334.3z" fill="#d2d2d2"/><path d="M1623.6 331.3l4.3 3.8" stroke="#2c2c2c" stroke-width="1.1"/>
  <!-- row 4 -->
  <g fill="#d4d4d4"><path d="M1619.5 385.3L1633.3 371.3" stroke="#d4d4d4" stroke-width="5"/><circle cx="1617.2" cy="382.9" r="3.2"/><circle cx="1621.7" cy="387.8" r="3.2"/><circle cx="1631" cy="369" r="3.1"/><circle cx="1635.6" cy="373.5" r="3.2"/></g>
  <path d="M1647.4 389.8V395H1642.2z" fill="#c8c8c8"/>
  <rect x="-7.75" y="-5.3" width="15.5" height="10.6" rx="2.3" transform="translate(1675.1 381.5) rotate(-40.5)" fill="url(#ig)"/>
  <rect x="-6.2" y="-3.8" width="12.4" height="7.6" rx="1.5" transform="translate(1675.1 381.5) rotate(-40.5)" fill="#a8a8a8" opacity=".55"/>
  <path d="M1672 374.2V369.6a3.3 3.3 0 0 1 6.6 0V378.3" fill="none" stroke="#e2e2e2" stroke-width="1.5"/>
  <path d="M1681.4 375.8Q1688.8 377 1687.5 386.5" fill="none" stroke="#d2d2d2" stroke-width="2.8"/><circle cx="1687.3" cy="386.7" r="2.4" fill="#d2d2d2"/>
  <rect x="-4.9" y="-4.3" width="9.8" height="8.6" rx="1.8" transform="translate(1720.3 379.1) rotate(-43)" fill="url(#ig)"/>
  <path d="M1718.4 376.5V369.2a2.7 2.7 0 0 1 5.4 0V376" fill="none" stroke="#e2e2e2" stroke-width="1.4"/>
  <path d="M1725.6 373.7Q1730.3 376.5 1731.3 383.2" fill="none" stroke="#dedede" stroke-width="3"/>
  <path d="M1733.5 378.7H1741V391H1729.1V387.5" fill="none" stroke="#c6c6c6" stroke-width="2.2"/>
  <g transform="translate(1769.9 388.5) rotate(-43)"><path d="M0.5 0Q0.5 -2.1 3 -2.1H18V2.1H3Q0.5 2.1 0.5 0z" fill="#3a3a3a" stroke="#dcdcdc" stroke-width="1.3"/><rect x="14.5" y="-3.1" width="3" height="6.2" fill="#d0d0d0"/><rect x="17" y="-4.8" width="4.6" height="9.6" fill="#d8d8d8"/><path d="M21.6 -2.6h5a2.6 2.6 0 0 1 0 5.2h-5z" fill="#dadada"/></g>
  <path d="M1831.4 368H1842.2L1833.5 377H1822.7z" fill="#dcdcdc"/><path d="M1822.7 377.4H1832.8L1830.3 387.1H1821.2Q1819.2 387.1 1819.7 385.2z" fill="url(#ig)"/><path d="M1842.2 368.3L1843 372.5L1831.4 386.8L1833.6 377.4z" fill="#969696"/><path d="M1830.8 367.3H1842.5" stroke="#262626" stroke-width="1"/>
  <path d="M1870.3 373.5Q1870.5 368.5 1873.5 368.3Q1877 368.5 1878 373Q1878.5 377 1880.5 379.5Q1883 379.5 1885 377Q1888 373.5 1891.5 374Q1895.5 375 1895.5 380V382.8H1893.2Q1893.5 378.5 1891.3 378.3Q1889.5 378.5 1888 381.5Q1885 386.5 1879.5 386Q1875 385.5 1873.2 383.5Q1875.8 381 1875.3 377.5Q1875 373 1873.3 371.3Q1872 371.5 1871.8 373.8z" fill="#c4c4c4"/>
  <path d="M1869.9 386.7L1885.2 371.8" stroke="#f0f0f0" stroke-width="1.1"/>
  <circle cx="1876.9" cy="380.1" r="2.5" fill="#6a6a6a" stroke="#fff" stroke-width="1.5"/><circle cx="1869.9" cy="386.7" r="1.8" fill="#444" stroke="#f0f0f0" stroke-width="1.2"/><circle cx="1885.2" cy="371.8" r="1.8" fill="#444" stroke="#f0f0f0" stroke-width="1.2"/>
  <!-- row 5 -->
  <rect x="1613" y="417.2" width="16.8" height="17.2" rx="3.2" fill="#5f5f5f"/><path d="M1628.5 426L1640 418.3V433.3z" fill="#5f5f5f"/>
  <g stroke="#d2d2d2" stroke-linecap="round" fill="none"><path d="M1673.6 428V419.5M1677.7 427V416.2M1681.8 427V417.2" stroke-width="3.3"/><path d="M1685.8 428.5L1687.3 421" stroke-width="3.1"/><path d="M1672.5 434L1666.5 427.3" stroke-width="3.5"/></g>
  <path d="M1671.9 426H1687.5L1685.3 433.5L1684.8 439.2H1672.8L1672 433.5z" fill="url(#ig)"/>
  <path d="M1698.2 437.2V442.5H1693z" fill="#c8c8c8"/>
  <path d="M1731 428L1739.6 436.3" stroke="#c6c6c6" stroke-width="3.4" stroke-linecap="round"/>
  <circle cx="1725.9" cy="422.9" r="6.5" fill="#7c7c7c" stroke="#d0d0d0" stroke-width="2.3"/>
  <!-- color row -->
  <g transform="translate(1614.3 486.8) rotate(-46) scale(.76)"><path d="M0 0L7 -3.3V3.3z" fill="#e4e4e4"/><rect x="7" y="-3.3" width="14" height="6.6" fill="#8e8e8e"/><rect x="7" y="-3.3" width="14" height="2.2" fill="#b0b0b0"/><path d="M22.3 -3.3h4.2a3.3 3.3 0 0 1 0 6.6h-4.2z" fill="#e6e6e6"/><path d="M7 -3.6V3.6M21.6 -3.6V3.6" stroke="#262626" stroke-width="1.3"/></g>
  <path d="M1688 481.5L1695.5 475L1701.5 480.5L1695 488Q1692.5 489.5 1690.5 487.5z" fill="url(#ig)"/>
  <path d="M1693.2 479.5V472.5a2.4 2.4 0 0 1 4.8 0V479.5" fill="none" stroke="#dedede" stroke-width="1.3"/>
  <path d="M1699.5 476.5Q1704.5 479 1704.8 486.5Q1703.2 488.5 1701.8 486.5Q1702.5 482 1698.3 479.5z" fill="#d2d2d2"/>
  <rect x="1764.5" y="473.5" width="9" height="9" fill="#111" stroke="#d8d8d8" stroke-width="1.2"/><rect x="1758.5" y="467.5" width="9.5" height="9.5" fill="#ececec" stroke="#2a2a2a" stroke-width="1.2"/>
  <rect x="1778.7" y="467.2" width="6" height="6" fill="#080808" stroke="#e0e0e0" stroke-width="1.2"/><rect x="1778.7" y="476.7" width="6" height="6" fill="#f2f2f2" stroke="#d0d0d0" stroke-width="1"/>
  <path d="M1789 470.5Q1795.5 471 1794.5 479" fill="none" stroke="#e0e0e0" stroke-width="1.6"/><path d="M1791.3 467l-3.5 3.5 3.5 3.5M1791 477l3.3 3.7 3-3.7" fill="none" stroke="#e0e0e0" stroke-width="1.5"/>
  <!-- bottom (clipped) row -->
  <circle cx="1626.6" cy="530.5" r="6.3" fill="none" stroke="#e2e2e2" stroke-width="4.8"/>
  <path d="M1682.5 520Q1670 525 1682.5 533" fill="none" stroke="#686868" stroke-width="1.5"/>
  <path d="M1724.3 519.5V528H1734.3V534" fill="none" stroke="#686868" stroke-width="1.7"/>
</svg>
<div class="t" style="left:1667.5px;top:271.5px;font-family:'Liberation Serif',serif;font-size:31px;color:#d6d6d6">T</div>
<!-- ===== actions panel ===== -->
<div class="a" id="ap">
  <div class="a" id="aphead"></div>
  <div class="a" id="aptabs"></div>
    <div class="a" style="left:-1.5px;top:22px;width:54.5px;height:26px;background:#474747;border-right:1px solid #555;border-top:1px solid #565656"></div>
  <div class="t" style="left:9px;top:26px;font-size:16px;font-weight:bold;color:#dedede">动作</div>
  <div class="a" id="tree"></div>
  <!-- tree rows -->
  <svg style="left:7.5px;top:56.5px" width="10" height="14" viewBox="0 0 10 14"><path d="M0.5 0.5L9.5 7L0.5 13.5z" fill="#c8c8c8"/></svg>
  <svg style="left:33px;top:53.5px" width="18" height="20" viewBox="0 0 18 20"><path d="M0.5 0.5h10.5l6.5 6.5v12.5h-17z" fill="url(#gg)"/><path d="M11 0.5v6.5h6.5z" fill="#444"/><path d="M11.8 2.4v3.8h3.8z" fill="#d8d8d8"/></svg>
  <div class="t trt" style="left:64px;top:55.5px">全局</div>
  <svg style="left:5.5px;top:87.0px" width="14" height="10" viewBox="0 0 14 10"><path d="M0.5 0.5h13L7 9.5z" fill="#c8c8c8"/></svg>
  <svg style="left:31px;top:80.0px" width="23" height="23" viewBox="0 0 26 22"><rect x="2" y="11" width="22" height="10" rx="1" fill="url(#gg)"/><path d="M2 8.5h22v2H2z" fill="#d0d0d0"/><path d="M1 5.5L21 0.5l0.8 2.8L1.8 8.3z" fill="#d8d8d8"/><path d="M5 4.6l2 2.6M10 3.4l2 2.6M15 2.2l2 2.6M6 8.5l2 2M11.5 8.5l2 2M17 8.5l2 2" stroke="#424242" stroke-width="1.8"/></svg>
  <div class="t trt" style="left:64px;top:84.0px">场景 1</div>
  <svg style="left:67.5px;top:110.5px" width="10" height="20" viewBox="0 0 10 20"><rect x="0.5" y="0.5" width="9" height="19" fill="url(#gg)"/><rect x="0.5" y="0.5" width="9" height="1.5" fill="#2a2a2a"/><circle cx="5" cy="13.5" r="3" fill="#2b2b2b"/></svg>
  <div class="t trt" style="left:93px;top:112.5px">Actions : 第 1 帧</div>
  <svg style="left:5.5px;top:144.0px" width="14" height="10" viewBox="0 0 14 10"><path d="M0.5 0.5h13L7 9.5z" fill="#c8c8c8"/></svg>
  <svg style="left:33px;top:137.0px" width="20" height="22" viewBox="0 0 20 22"><g fill="url(#gg)"><circle cx="10" cy="5.5" r="4.6"/><circle cx="5" cy="12" r="4.6"/><circle cx="15" cy="12" r="4.6"/><path d="M8.5 9h3l0.5 8h3.5v3h-11v-3h3.5z"/></g><path d="M4 16.6h12" stroke="#424242" stroke-width="1"/></svg>
  <div class="t trt" style="left:66px;top:141.0px">元件定义</div>
  <svg style="left:35.5px;top:172.5px" width="14" height="10" viewBox="0 0 14 10"><path d="M0.5 0.5h13L7 9.5z" fill="#c8c8c8"/></svg>
  <svg style="left:61.5px;top:166.5px" width="21" height="21" viewBox="0 0 22 21"><rect x="0" y="0" width="22" height="21" fill="url(#gg)"/><g fill="#333" clip-path="url(#symclip)"><circle cx="22" cy="0" r="16.8"/><rect x="-2.6" y="14" width="5.2" height="6.8" transform="translate(22 0) rotate(82)"/><rect x="-2.6" y="14" width="5.2" height="6.8" transform="translate(22 0) rotate(57)"/><rect x="-2.6" y="14" width="5.2" height="6.8" transform="translate(22 0) rotate(31)"/><rect x="-2.6" y="14" width="5.2" height="6.8" transform="translate(22 0) rotate(6)"/></g><circle cx="22" cy="0" r="10" fill="none" stroke="#d2d2d2" stroke-width="2" clip-path="url(#symclip)"/><circle cx="22" cy="0" r="5.2" fill="#b4b4b4" clip-path="url(#symclip)"/></svg>
  <div class="t trt" style="left:94px;top:169.5px">元件 2</div>
  <svg style="left:97.5px;top:196.0px" width="10" height="20" viewBox="0 0 10 20"><rect x="0.5" y="0.5" width="9" height="19" fill="url(#gg)"/><rect x="0.5" y="0.5" width="9" height="1.5" fill="#2a2a2a"/><circle cx="5" cy="13.5" r="3" fill="#2b2b2b"/></svg>
  <div class="t trt" style="left:123px;top:198.0px">Actions : 第 1 帧</div>
  <svg style="left:97.5px;top:224.5px" width="10" height="20" viewBox="0 0 10 20"><rect x="0.5" y="0.5" width="9" height="19" fill="url(#gg)"/><rect x="0.5" y="0.5" width="9" height="1.5" fill="#2a2a2a"/><circle cx="5" cy="13.5" r="3" fill="#2b2b2b"/></svg>
  <div class="t trt" style="left:123px;top:226.5px">Actions : 第 380 帧</div>
  <svg style="left:35.5px;top:258.0px" width="14" height="10" viewBox="0 0 14 10"><path d="M0.5 0.5h13L7 9.5z" fill="#c8c8c8"/></svg>
  <svg style="left:61.5px;top:252.0px" width="21" height="21" viewBox="0 0 22 21"><rect x="0" y="0" width="22" height="21" fill="url(#gg)"/><g fill="#333" clip-path="url(#symclip)"><circle cx="22" cy="0" r="16.8"/><rect x="-2.6" y="14" width="5.2" height="6.8" transform="translate(22 0) rotate(82)"/><rect x="-2.6" y="14" width="5.2" height="6.8" transform="translate(22 0) rotate(57)"/><rect x="-2.6" y="14" width="5.2" height="6.8" transform="translate(22 0) rotate(31)"/><rect x="-2.6" y="14" width="5.2" height="6.8" transform="translate(22 0) rotate(6)"/></g><circle cx="22" cy="0" r="10" fill="none" stroke="#d2d2d2" stroke-width="2" clip-path="url(#symclip)"/><circle cx="22" cy="0" r="5.2" fill="#b4b4b4" clip-path="url(#symclip)"/></svg>
  <div class="t trt" style="left:94px;top:255.0px">元件 4</div>
  <svg style="left:97.5px;top:281.5px" width="10" height="20" viewBox="0 0 10 20"><rect x="0.5" y="0.5" width="9" height="19" fill="url(#gg)"/><rect x="0.5" y="0.5" width="9" height="1.5" fill="#2a2a2a"/><circle cx="5" cy="13.5" r="3" fill="#2b2b2b"/></svg>
  <div class="t trt" style="left:123px;top:283.5px">Actions : 第 1 帧</div>
  <svg style="left:97.5px;top:310.0px" width="10" height="20" viewBox="0 0 10 20"><rect x="0.5" y="0.5" width="9" height="19" fill="url(#gg)"/><rect x="0.5" y="0.5" width="9" height="1.5" fill="#2a2a2a"/><circle cx="5" cy="13.5" r="3" fill="#2b2b2b"/></svg>
  <div class="t trt" style="left:123px;top:312.0px">Actions : 第 3 帧</div>
  
  <div class="a" id="apdiv"></div>
  <div class="a" style="left:481px;top:48px;width:273px;height:30px;background:#0e0e0e"></div>
  <div class="a" style="left:481px;top:50px;width:97px;height:29px;background:#464646;border-top:1px solid #555"></div>
  <div class="t" style="left:499px;top:56px;font-size:18px;color:#c8c8c8;letter-spacing:.4px">当前帧</div>
  <div class="a" style="left:481px;top:79px;width:273px;height:41px;background:#464646;border-bottom:2px solid #2a2a2a"></div>
  <div class="t" style="left:501px;top:94px;font-size:17px;color:#c8c8c8">图层<span style="font-size:16px;letter-spacing:-.3px">_1:1</span></div>
  <div class="a" style="left:482px;top:123px;width:273px;height:730px;background:#fff"></div>
  <div class="a" style="left:482px;top:123px;width:40px;height:730px;background:#f0f0f0"></div>
  <div class="a" style="left:522px;top:123px;width:16px;height:730px;background:#f7f7f7"></div>
  <div class="t" style="left:493px;top:124px;font-size:19.5px;font-family:'Liberation Serif',serif;color:#6e6254;transform-origin:0 0;transform:scaleX(.72)">1</div>
</div>
<div id="taskbar" class="a"></div>
<div id="search" class="a"></div>

<!-- ===== taskbar content ===== -->
<div class="a" style="left:72px;top:1382px;width:2px;height:56px;background:#c6c6c6"></div>
<svg style="left:24px;top:1398px" width="24" height="24" viewBox="0 0 24 24" fill="#000"><path d="M0 3.4L9.8 2v9.4H0zM10.8 1.850L24 0v11.4H10.8zM0 12.4h9.8v9.5L0 20.5zM10.8 12.4H24V24l-13.2-1.900z"/></svg>
<svg style="left:88px;top:1396px" width="28" height="28" viewBox="0 0 28 28"><circle cx="17.4" cy="9.8" r="7.5" fill="none" stroke="#111" stroke-width="1.7"/><path d="M12 15.2L2.5 25.5" stroke="#111" stroke-width="1.900"/></svg>
<div class="t" style="left:132px;top:1400px;font-size:24px;color:#1f1f1f">在这里输入你要搜索的内容</div>
<svg style="left:611px;top:1397px" width="26" height="26" viewBox="0 0 26 26"><circle cx="13" cy="13" r="9.8" fill="none" stroke="#0a0a0a" stroke-width="3.2"/></svg>
<svg style="left:683px;top:1397px" width="26" height="25" viewBox="0 0 26 25" fill="none" stroke="#111" stroke-width="1.7"><rect x="2" y="6" width="14" height="11"/><path d="M1 3V1h16v2M1 21v2h16v-2M23.5 1v9M23.5 14v10"/><rect x="22.3" y="8" width="2.4" height="2.4" fill="#111" stroke="none"/></svg>
<!-- chrome -->
<svg style="left:756px;top:1393px" width="34" height="34" viewBox="-17 -17 34 34">
  <circle r="16.8" fill="#e33b2e"/>
  <path d="M0 0L-14.550 -8.4A16.8 16.8 0 0 0 -6.5 15.5L0.8 2.8z" fill="#2da94f"/>
  <path d="M0 0L-14.550 -8.4A16.8 16.8 0 0 0 -7.4 15.080L0 2z" fill="#2da94f"/>
  <path d="M-7.4 15.080A16.8 16.8 0 0 0 16.8 0A16.8 16.8 0 0 0 15.8 -5.7L0 -5.7z" fill="#fdd23f"/>
  <path d="M-7.4 15.080L0.5 1.5L-7 -4z" fill="#2da94f"/>
  <circle r="7.7" fill="#f4f4f4"/><circle r="6.1" fill="#3f7fea"/>
</svg>
<!-- wps -->
<svg style="left:830px;top:1396px" width="38" height="32" viewBox="0 0 38 32">
  <path d="M0 1.5h9l6.5 17L21 5h-7l1.5-3.5H36L26 27.5h-6l-2.5-6.5-2.5 6.5H9z" fill="#f0222a"/>
  <path d="M22 1.5h6L18 27.5h-3z" fill="#ff7a1a" opacity=".9"/>
  <rect x="21.5" y="17" width="13.5" height="14" rx="2" fill="#4f94f7"/><rect x="23" y="16" width="10" height="3" rx="1" fill="#8bbcff"/>
  <path d="M24.5 22l1.8 6 2-4.5 2 4.5 1.8-6" fill="none" stroke="#fff" stroke-width="1.5"/>
</svg>
<!-- An (active) -->
<div class="a" style="left:887px;top:1380px;width:73px;height:57px;background:#efedeb"></div>
<div class="a" style="left:906px;top:1392px;width:34px;height:32px;background:#2b0602;border:2px solid #f0452a;box-shadow:0 1px 2px rgba(0,0,0,.4)"><div class="t" style="left:3px;top:4px;font-size:21px;font-weight:bold;color:#ff5533;letter-spacing:-1px;transform-origin:0 0;transform:scaleX(.92)">An</div></div>
<!-- Ps -->
<svg style="left:980px;top:1391px" width="36" height="36" viewBox="0 0 36 36">
  <defs><linearGradient id="psg" x1="0" y1="0" x2="1" y2="1"><stop offset="0" stop-color="#1573c6"/><stop offset="1" stop-color="#003a78"/></linearGradient></defs>
  <path d="M1 3l3-2h27l3 2v30l-3 2H4l-3-2z" fill="#00305f"/><rect x="2" y="2" width="31" height="30" fill="url(#psg)"/>
</svg>
<div class="t" style="left:988px;top:1398px;font-size:20px;font-weight:bold;color:#55ccff;letter-spacing:-.8px">Ps</div>
<!-- explorer -->
<svg style="left:1056px;top:1396px" width="34" height="28" viewBox="0 0 34 28">
  <path d="M1 2.5q0-1.5 1.5-1.5H12l3 3H1z" fill="#e3a81d"/><rect x="1" y="3.5" width="32" height="22" rx="1" fill="#fdd55a"/><path d="M1 8h32v3H1z" fill="#f7c53e" opacity=".5"/>
  <path d="M6 15h22v12h-6v-6h-10v6H6z" fill="#3d8fe0"/><path d="M6 15h22v3H6z" fill="#5fb0f2"/>
</svg>
<div class="a ul" style="left:743px;width:61px"></div><div class="a ul" style="left:818px;width:61px"></div><div class="a ul" style="left:887px;width:73px"></div>
<div class="a ul" style="left:968px;width:61px"></div><div class="a ul" style="left:1043px;width:49px"></div><div class="a ul" style="left:1092px;width:12px;background:#dc9f84"></div>
<!-- tray -->
<svg style="left:1685px;top:1402px" width="20" height="14" viewBox="0 0 20 14"><path d="M1 12l9-9.5L19 12" fill="none" stroke="#111" stroke-width="1.6"/></svg>
<svg style="left:1720px;top:1399px" width="22" height="22" viewBox="0 0 22 22" stroke="#111" fill="none"><path d="M1 6h20M1 16h20" stroke-width="2.6"/><path d="M14 1.5v9M7 11.5v9" stroke-width="3"/></svg>
<svg style="left:1754px;top:1397px" width="28" height="28" viewBox="0 0 28 28"><path d="M1.5 4.5L24 1v19L1.5 21z" fill="none" stroke="#111" stroke-width="1.4"/><path d="M8 11a4.5 4.5 0 0 1 8-1.5M16 13a4.5 4.5 0 0 1-8 1.5M16 7v3h-3M8 17v-3h3" fill="none" stroke="#111" stroke-width="1.2"/><circle cx="19.5" cy="20" r="5.2" fill="#2f6fc4"/></svg>
<svg style="left:1790px;top:1399px" width="28" height="20" viewBox="0 0 28 20"><path d="M3 2v4M7 2v4M1.5 6h7v3q0 2.5-3.5 2.5T1.5 9zM5 11.5V17" fill="none" stroke="#111" stroke-width="1.3"/><rect x="6" y="6.5" width="18" height="10" fill="none" stroke="#111" stroke-width="1.3"/><rect x="8" y="8.5" width="14" height="6" fill="#111"/><rect x="24.5" y="9.5" width="1.8" height="4" fill="#111"/></svg>
<svg style="left:1828px;top:1398px" width="26" height="24" viewBox="0 0 26 24" fill="none" stroke="#222" stroke-width="1.3"><path d="M2 22A20 20 0 0 1 22 2"/><path d="M7 22A15 15 0 0 1 22 7"/><path d="M12 22a10 10 0 0 1 10-10"/><circle cx="20.5" cy="20.5" r="1.5" fill="#111" stroke="none"/></svg>
<svg style="left:1862px;top:1398px" width="28" height="24" viewBox="0 0 28 24" fill="none" stroke="#111" stroke-width="1.3"><path d="M1.5 8h5l6-6v20l-6-6h-5z"/><path d="M15.5 8.5a5 5 0 0 1 0 7" stroke="#333"/><path d="M18.5 5.5a9 9 0 0 1 0 13" stroke="#777"/><path d="M21.5 2.5a13.5 13.5 0 0 1 0 19" stroke="#aaa"/></svg>
<div class="t" style="left:1926px;top:1386px;font-size:19px;color:#111;letter-spacing:-.3px">17:33</div>
<div class="t" style="left:1905px;top:1414px;font-size:19px;color:#111;letter-spacing:.75px">2022/5/22</div>
<svg style="left:2028px;top:1395px" width="34" height="28" viewBox="0 0 34 28" fill="#111"><rect x="0.7" y="0" width="3.9" height="26.3"/><rect x="28.1" y="0" width="3.9" height="26.3"/><path d="M5.4 1.2H10.3L16.3 14.8L22.3 1.2H27.2L18.4 22.6H14.2z"/></svg>
<svg style="left:2097px;top:1396px" width="42" height="42" viewBox="0 0 42 42"><path d="M1 1h24v19H14l-6 6v-6H1z" fill="#111"/><path d="M6 6h14M6 10h14M6 14h10" stroke="#ddd" stroke-width="1.3"/><circle cx="24.5" cy="25.5" r="11" fill="#d8d8d8" stroke="#9a9a9a" stroke-width="1"/></svg>
<div class="t" style="left:2116px;top:1412px;font-size:19px;font-weight:bold;color:#111">2</div>
<div class="a" style="left:2153px;top:1380px;width:1px;height:60px;background:#9c9c9c"></div>
<!-- IME toolbar -->
<div class="a" style="left:1932px;top:1347px;width:228px;height:33px;background:#fff"></div>
<div class="a" style="left:1938px;top:1349px;width:2px;height:28px;background:repeating-linear-gradient(#c4c4c4 0,#c4c4c4 2px,transparent 2px,transparent 6px)"></div>
<div class="a" style="left:1950px;top:1351px;width:24px;height:24px;border:1.5px solid #9a9a9a"></div>
<div class="t ime" style="left:1953px;top:1354px;font-size:18.5px;font-weight:normal;color:#222">拼</div>
<div class="t ime" style="left:1983.5px;top:1353px;font-size:23px">中</div>
<svg style="left:0;top:0" width="2160" height="1440" viewBox="0 0 2160 1440"><path d="M2023.9 1353.3C2034 1357 2037 1366 2031 1371.5C2026 1375.5 2019.5 1373.8 2016.5 1369.6C2022 1369.5 2027.5 1367 2028.3 1362.2C2028.6 1358 2027 1355.5 2023.9 1353.3z" fill="#0a0a0a"/></svg>
<svg style="left:2044px;top:1354px" width="28" height="22" viewBox="0 0 28 22"><circle cx="5.4" cy="5" r="2.9" fill="none" stroke="#0a0a0a" stroke-width="2.6"/><path d="M12.5 11.5h6.5q0.5 6-5.5 9.5l-1.5-1.5q3.5-2.5 3-4h-2.5z" fill="#0a0a0a"/></svg>
<div class="t ime" style="left:2073px;top:1352px;font-size:24px">简</div>
<svg style="left:2104px;top:1352px" width="24" height="24" viewBox="0 0 24 24"><circle cx="12" cy="12" r="8" fill="none" stroke="#0a0a0a" stroke-width="6" stroke-dasharray="4.2 2.08"/><circle cx="12" cy="12" r="5.5" fill="#0a0a0a"/><circle cx="12" cy="12" r="2.6" fill="#fff"/></svg>
<svg style="left:2142px;top:1356px" width="12" height="18" viewBox="0 0 12 18" fill="#0a0a0a"><rect x="1.5" y="1.5" width="8" height="2.6"/><rect x="1.5" y="7" width="8" height="2.6"/><path d="M1 12.5h9.5L5.700 17z"/></svg>
</body>
</html>
